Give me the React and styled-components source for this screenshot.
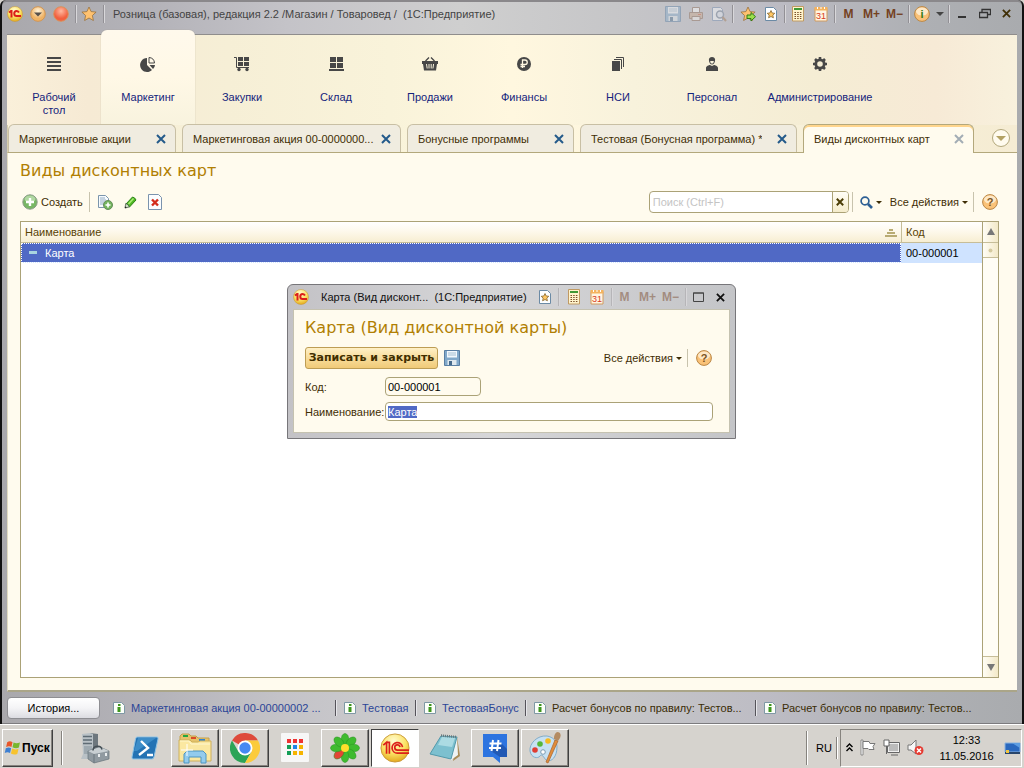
import React from 'react'
import styled, { createGlobalStyle, css } from 'styled-components'

const GlobalStyle = createGlobalStyle`
    * { box-sizing: border-box; }
    html, body, #root { height: 100%; }
    body {
        margin: 0;
        background: #d6d3ce;
        color: #3f2e05;
        font: 11px/14px "Liberation Sans", Arial, sans-serif;
    }
    button, input { font: inherit; color: inherit; }
    button { padding: 0; border: 0; background: none; cursor: pointer; }
    svg { display: block; flex: none; }
    h1, h2 { margin: 0; font-weight: normal; }
`

const Screen = styled.div`
    position: relative;
    display: flex;
    flex-direction: column;
    height: 100vh;
    min-height: 480px;
    overflow: hidden;
`
const Window = styled.div`
    flex: 1;
    min-height: 0;
    display: flex;
    flex-direction: column;
    padding: 0 5px;
    border: 2px solid #111;
    border-width: 0 2px 0 2px;
    border-radius: 6px 6px 0 0;
    background: linear-gradient(90deg, #a9a8ac, #b4b3b9 15%, #c4c3c8 28%, #cfcfcf 45%, #c6c6c8 60%, #bdbcc4 75%, #aeb0b4 90%, #a9abae);
    box-shadow: inset 0 3px 0 -1px #8a888b, inset 0 -1px 0 #7c7b7e;
`
const TitleBar = styled.header`
    display: flex;
    align-items: center;
    height: 35px;
    padding: 0 1px 8px 0;
    flex: none;
`
const AppButtons = styled.div`
    display: flex;
    gap: 7px;
`
const Split = styled.span`
    width: 2px;
    height: ${props => props.h || 18}px;
    margin: ${props => props.m || '0 6px'};
    border-left: 1px solid ${props => props.c || '#929095'};
    border-right: 1px solid ${props => props.light || '#d8d7da'};
    flex: none;
`
const TitleText = styled.span`
    flex: 1;
    padding-left: 2px;
    white-space: pre;
    overflow: hidden;
    color: #444;
`
const TitleTools = styled.div`
    display: flex;
    align-items: center;
`
const IconButton = styled.button`
    display: flex;
    align-items: center;
    justify-content: center;
    width: ${props => props.w || 23}px;
    height: 20px;
    flex: none;
    opacity: ${props => (props.disabled ? 0.45 : 1)};
`
const MemoryButton = styled(IconButton)`
    font-weight: bold;
    font-size: 12px;
    color: #74411f;
`
const Sections = styled.nav`
    display: flex;
    height: 90px;
    flex: none;
    background: linear-gradient(90deg, #faf0da, #f6ead4 8%, #f6efd6 22%, #f9f3da 38%, #fff7df 50%, #f8f2dc 62%, #f5edd4 80%, #f7ead6 92%, #f8f1dd);
    box-shadow: 0 -1px 0 #8f8d8c;
`
const Section = styled.a`
    display: flex;
    flex-direction: column;
    align-items: center;
    width: ${props => props.w || 94}px;
    padding: 21px 8px 0;
    color: #14237c;
    text-align: center;
    text-decoration: none;

    span { max-width: ${props => (props.w ? 'none' : '64px')}; margin-top: 19px; line-height: 13px; }
    ${props => props.$active && css`
        margin-top: -5px;
        padding-top: 26px;
        border-radius: 6px 6px 0 0;
        background: linear-gradient(#fff9ec, #fff8e6 50%, #f8f3de);
        box-shadow: 0 0 1px #a09a86;
    `}
`
const TabStrip = styled.div`
    display: flex;
    align-items: flex-end;
    gap: 6px;
    height: 28px;
    flex: none;
    border-bottom: 1px solid #b3a87c;
    border-left: 1px solid #d6cead;
    background: linear-gradient(90deg, #f8f2dc, #f6efd6 22%, #f9f3da 38%, #fff7df 55%, #f8f2dc 70%, #f5ecd3);
`
const Tab = styled.div`
    display: flex;
    align-items: center;
    justify-content: space-between;
    flex: 0 1 ${props => props.w}px;
    min-width: 0;
    height: 28px;
    padding: 0 7px 0 10px;
    white-space: nowrap;
    border: 1px solid #c8bfa4;
    border-bottom: 0;
    border-radius: 6px 6px 0 0;
    background: #f0ece0;

    ${props => props.$active && css`
        height: 29px;
        margin-bottom: -1px;
        padding-bottom: 1px;
        border-color: #b3a87c;
        background: #fffbee;
        box-shadow: inset 0 2px 0 #ffd58c;
    `}
    button { color: ${props => (props.$active ? '#a3adb5' : '#245a8a')}; }
`
const TabName = styled.span`
    overflow: hidden;
    text-overflow: ellipsis;
`
const TabMenu = styled.button`
    display: flex;
    align-items: center;
    justify-content: center;
    width: 18px;
    height: 18px;
    margin: 0 7px 5px auto;
    border: 1px solid #b3a87c;
    border-radius: 50%;
    background: #fffbee;
`
const Page = styled.main`
    flex: 1;
    min-height: 0;
    display: flex;
    flex-direction: column;
    padding: 7px 18px 12px 12px;
    border-bottom: 2px solid #aaa588;
    border-left: 1px solid #e2dcc2;
    background: #fffbee;
`
const Heading = styled.h1`
    font: 16px/22px "DejaVu Sans", Verdana, sans-serif;
    color: #b17f03;
`
const Toolbar = styled.div`
    display: flex;
    align-items: center;
    height: 22px;
    margin: 9px 0 8px;
    padding-left: 2px;
    flex: none;
`
const TextButton = styled.button`
    display: flex;
    align-items: center;
    gap: 3px;
    height: 20px;
    white-space: nowrap;
`
const ActionsButton = styled(TextButton)`
    margin-left: 8px;
`
const SearchBox = styled.div`
    display: flex;
    width: 200px;
    height: 22px;
    margin-left: auto;
    border: 1px solid #aba277;
    border-radius: 4px;
    background: #fff;
    overflow: hidden;

    input {
        flex: 1;
        min-width: 0;
        padding: 0 3px;
        border: 0;
        outline: 0;
        background: none;
    }
    input::placeholder { color: #c4c4c4; opacity: 1; }
    button {
        display: flex;
        align-items: center;
        justify-content: center;
        width: 16px;
        border-left: 1px solid #aba277;
        background: linear-gradient(#fffdf6, #f5eccb);
        color: #4a3c05;
    }
`
const ListFrame = styled.div`
    flex: 1;
    min-height: 0;
    display: flex;
    border: 1px solid #aba277;
    background: #fff;
`
const ListArea = styled.div`
    flex: 1;
    overflow: hidden;
`
const List = styled.table`
    width: 100%;
    table-layout: fixed;
    border-collapse: separate;
    border-spacing: 0;

    th {
        height: 21px;
        padding: 0 4px;
        text-align: left;
        font-weight: normal;
        color: #594304;
        border-bottom: 1px solid #c6bd98;
        background: linear-gradient(#fff, #fdf8ea 50%, #f7eed2);
    }
    th + th { width: 81px; border-left: 1px solid #c6bd98; }
    th div { display: flex; align-items: center; justify-content: space-between; }
    td { height: 20px; padding: 0 5px; background: #cfe3ff; color: #000; border-bottom: 1px solid #cfe3ff; }
    td:first-child { background: #5069c5; color: #fff; outline: 1px dotted #fff; outline-offset: -1px; }
    td div { display: flex; align-items: center; gap: 8px; padding-left: 3px; }
`
const ScrollBar = styled.div`
    display: flex;
    flex-direction: column;
    width: 16px;
    flex: none;
    border-left: 1px solid #aba277;
    background: #fffdf5;
`
const ScrollButton = styled.button`
    display: flex;
    align-items: center;
    justify-content: center;
    height: ${props => props.h || 21}px;
    border: solid #c6bd98;
    border-width: ${props => (props.$last ? '1px 0 0' : '0 0 1px')};
    margin-top: ${props => (props.$last ? 'auto' : 0)};
    background: linear-gradient(90deg, #fffdf5, #f3e9c8);
`
const HistoryBar = styled.footer`
    display: flex;
    align-items: center;
    height: 32px;
    flex: none;
`
const HistoryButton = styled.button`
    width: 93px;
    height: 22px;
    margin-right: 13px;
    flex: none;
    border: 1px solid #8e8e92;
    border-radius: 4px;
    background: linear-gradient(#fff, #f4f4f6 50%, #dcdce1);
    color: #000;
`
const HistoryItem = styled.a`
    display: flex;
    align-items: center;
    gap: 6px;
    flex: 0 1 ${props => props.w}px;
    min-width: 0;
    color: ${props => (props.$visited ? '#3a2c05' : '#2b4597')};
    text-decoration: none;
    white-space: nowrap;
    overflow: hidden;

    & + & {
        padding-left: 8px;
        border-left: 1px solid #55535a;
        box-shadow: inset 1px 0 0 #e6e6ea;
        height: 16px;
    }
`
const Dialog = styled.section`
    position: absolute;
    left: 287px;
    top: 284px;
    width: 449px;
    padding: 0 5px 5px;
    border: 1px solid #77767a;
    border-radius: 6px 6px 0 0;
    background: linear-gradient(90deg, #c3c2c6, #d6d6d8 45%, #c4c5c8);
`
const DialogBar = styled.div`
    display: flex;
    align-items: center;
    height: 24px;
    color: #111;
    white-space: pre;
`
const DialogCaption = styled.span`
    flex: 1;
    min-width: 0;
    padding-left: 12px;
    overflow: hidden;
`
const DialogBody = styled.form`
    padding: 7px 16px 11px 11px;
    border: 1px solid #c5c2b0;
    background: #fffbee;
`
const DialogTitle = styled.h2`
    font: 16px/22px "DejaVu Sans", Verdana, sans-serif;
    color: #b17f03;
`
const DialogTools = styled.div`
    display: flex;
    align-items: center;
    height: 22px;
    margin: 8px 0;
`
const Spacer = styled.span`
    flex: 1;
`
const SaveButton = styled.button`
    width: 133px;
    height: 22px;
    margin-right: 2px;
    border: 1px solid #bd9d54;
    border-radius: 3px;
    background: linear-gradient(#fff0c6, #f8dd9c 50%, #f0ca78);
    font: bold 11px/14px "DejaVu Sans", Verdana, sans-serif;
    color: #402e00;
    white-space: nowrap;
`
const Field = styled.div`
    display: flex;
    align-items: center;
    height: 19px;

    & + & { margin-top: 6px; }
    label { width: 80px; white-space: nowrap; }
    input {
        flex: 0 1 ${props => props.w}px;
        min-width: 0;
        height: 19px;
        padding: 0 2px;
        border: 1px solid #aba277;
        border-radius: 4px;
        outline: 0;
        color: #000;
        background: ${props => (props.$readOnly ? '#fffbee' : '#fff')};
    }
    input::selection { background: #5069c5; color: #fff; }
`
const TaskBar = styled.footer`
    display: flex;
    align-items: center;
    height: 44px;
    padding: 2px 2px 0 2px;
    flex: none;
    border-top: 1px solid #fff;
    background: #d6d3ce;
    color: #000;
`
const raised = css`
    border: 1px solid;
    border-color: #fff #404040 #404040 #fff;
    box-shadow: inset -1px -1px 0 #86837e;
`
const StartButton = styled.button`
    display: flex;
    align-items: center;
    gap: 1px;
    width: 51px;
    height: 38px;
    padding-left: 1px;
    ${raised}
    font-size: 12px;
    font-weight: bold;
`
const Tasks = styled.div`
    display: flex;
    gap: 2px;
    flex: 1;
    min-width: 0;
`
const Task = styled.button`
    display: flex;
    align-items: center;
    justify-content: center;
    flex: 0 1 48px;
    height: 38px;
    ${props => props.$open && raised}
    ${props => props.$active && css`
        border: 1px solid;
        border-color: #404040 #fff #fff #404040;
        background: #fff;
    `}
`
const Tray = styled.div`
    display: flex;
    align-items: center;
    gap: 6px;
    height: 38px;
    padding-left: 5px;
    border: 1px solid;
    border-color: #86837e #fff #fff #86837e;
`
const TrayIcon = styled.button`
    width: 18px;
    height: 18px;
`
const Clock = styled.time`
    width: 67px;
    padding-left: 4px;
    text-align: center;
    line-height: 16px;
`

const Cross = ({ size = 9, weight = 2 }) => (
    <svg width={size} height={size} viewBox="0 0 10 10" stroke="currentColor" strokeWidth={weight} fill="none">
        <path d="M1 1l8 8M9 1l-8 8" />
    </svg>
)
const Caret = ({ color = '#3f2e05', w = 6 }) => (
    <svg width={w} height={w / 2} viewBox="0 0 6 3"><path d="M0 0h6L3 3z" fill={color} /></svg>
)
const Logo = ({ size = 16 }) => (
    <svg width={size} height={size} viewBox="0 0 32 32">
        <defs>
            <radialGradient id="logo" cx=".45" cy=".25" r=".8">
                <stop offset="0" stopColor="#fffbd0" /><stop offset=".55" stopColor="#fbe264" /><stop offset="1" stopColor="#dfa014" />
            </radialGradient>
        </defs>
        <circle cx="16" cy="16" r="15" fill="url(#logo)" stroke="#c99735" />
        {size > 20 ? (
            <g fill="none" stroke="#dc1f1a" strokeWidth="1.8">
                <path d="M3.500 13l3.500-3v12M7 10h3v12" />
                <path d="M24 15a5.600 5.600 0 1 0-5.500 6.500H31M21.300 15a2.800 2.800 0 1 0-2.800 3.300H31" />
            </g>
        ) : (
            <g fill="none" stroke="#dc1f1a" strokeWidth="4">
                <path d="M4 13l4-3h1v13" />
                <path d="M24 13q-2-3-5-3-4.500 0-4.500 5t4.500 5h9" />
            </g>
        )}
    </svg>
)
const Orb = ({ red }) => (
    <svg width="16" height="16" viewBox="0 0 16 16">
        <defs>
            <radialGradient id={red ? 'orbRed' : 'orbSand'} cx=".5" cy=".3">
                <stop offset="0" stopColor={red ? '#ffb9a0' : '#fff4dc'} /><stop offset="1" stopColor={red ? '#f2603f' : '#efb365'} />
            </radialGradient>
        </defs>
        <circle cx="8" cy="8" r="7.300" fill={red ? 'url(#orbRed)' : 'url(#orbSand)'} stroke={red ? '#d9925c' : '#d29552'} />
        {!red && <path d="M4 6.500h8L8 10.500z" fill="#57504b" />}
    </svg>
)
const star = 'M8 1l2.100 4.600 5 .5-3.700 3.400 1 5L8 12l-4.400 2.500 1-5L.9 6.100l5-.5z'
const Star = ({ arrow }) => (
    <svg width="16" height="16" viewBox="0 0 16 16">
        <path d={star} fill="#ffc270" stroke="#98713c" strokeWidth=".8" />
        {arrow && <path d="M7 9h4V6.500l4.500 4.200L11 15v-2.500H7z" fill="#9ce04c" stroke="#317b14" />}
    </svg>
)
const StarPage = () => (
    <svg width="14" height="16" viewBox="0 0 14 16">
        <path d="M1.500 1.500h8l3 3v10h-11z" fill="#fdfeff" stroke="#6b8aa5" />
        <path d="M7 4.500l1.200 2.500 2.600.3-2 1.800.6 2.700L7 10.500l-2.400 1.300.6-2.700-2-1.800 2.600-.3z" fill="#ffc763" stroke="#87662f" strokeWidth=".8" />
    </svg>
)
const Floppy = () => (
    <svg width="16" height="16" viewBox="0 0 16 16">
        <path d="M.5.500h15v15H.5z" fill="#82a9ca" stroke="#5a7fa3" />
        <path d="M3 1h10v6.500H3z" fill="#f3f8fc" /><path d="M4 3h8M4 5h8" stroke="#a5bfd2" />
        <path d="M3.500 10h9v5h-9z" fill="#dfe8ee" /><path d="M5 11h3v4H5z" fill="#466a8b" />
    </svg>
)
const Printer = () => (
    <svg width="16" height="16" viewBox="0 0 16 16" stroke="#8d6c56">
        <path d="M4.500 7V1.500h7V7" fill="#fff" /><path d="M1.500 6.500h13v6h-13z" fill="#cba98d" /><path d="M4 10.500h8v4H4z" fill="#f6f3ef" /><path d="M10 8.500h3" stroke="#d45a3a" />
    </svg>
)
const Preview = () => (
    <svg width="16" height="16" viewBox="0 0 16 16" fill="none">
        <path d="M1.500 1.500h8l2 2v11h-10z" fill="#fbfdff" stroke="#748eb0" /><circle cx="9" cy="8.500" r="3.500" fill="#e6edf5" stroke="#728295" strokeWidth="1.500" /><path d="M11.500 11l3.500 4" stroke="#a27c56" strokeWidth="2" />
    </svg>
)
const Calculator = () => (
    <svg width="12" height="16" viewBox="0 0 12 16">
        <path d="M.5.500h11v14.500H.5z" fill="#fff4cd" stroke="#c09a62" /><path d="M2 2h8v2H2z" fill="#3f9935" />
        <path d="M2.500 6.500h7M2.500 8.500h7M2.500 10.500h7M2.500 12.500h7" stroke="#7a4f2a" strokeDasharray="1.500 1.200" />
    </svg>
)
const Calendar = () => (
    <svg width="14" height="16" viewBox="0 0 14 16">
        <path d="M1 2.500h12V15H1z" fill="#fff5e2" stroke="#d09a5e" /><path d="M.5 1h13v3.500H.5z" fill="#f4b35f" />
        <path d="M3.500 1v2M7 1v2M10.500 1v2" stroke="#fff" />
        <text x="7" y="13" textAnchor="middle" fontFamily="Liberation Sans" fontSize="9" fill="#d83b21">31</text>
    </svg>
)
const Badge = ({ children, color = '#7a541f' }) => (
    <svg width="16" height="16" viewBox="0 0 16 16">
        <circle cx="8" cy="8" r="7.400" fill="#fac278" stroke="#b98645" /><ellipse cx="8" cy="5.500" rx="6" ry="4" fill="#fff4e0" opacity=".75" />
        <text x="8" y="12" textAnchor="middle" fontFamily="Liberation Sans" fontSize="11" fontWeight="bold" fill={color}>{children}</text>
    </svg>
)
const InfoPage = () => (
    <svg width="12" height="14" viewBox="0 0 12 14">
        <path d="M.5 1.500h8l3 3v8H.5z" fill="#fbfff9" stroke="#7f98a5" /><path d="M5 3h2.500v2H5zM4.500 6h3v5h-3z" fill="#3e961c" />
    </svg>
)
const Plus = () => (
    <svg width="16" height="16" viewBox="0 0 16 16">
        <circle cx="8" cy="8" r="7.200" fill="#78b765" stroke="#8b9a88" /><ellipse cx="8" cy="5" rx="5.500" ry="3.500" fill="#c8e4ba" opacity=".7" />
        <path d="M8 4v8M4 8h8" stroke="#fff" strokeWidth="2.400" />
    </svg>
)
const CopyAdd = () => (
    <svg width="16" height="16" viewBox="0 0 16 16">
        <path d="M1.500 1.500h7l3 3v9h-10z" fill="#f6fafd" stroke="#7b95ac" /><path d="M3 4h5M3 6h6M3 8h6M3 10h4" stroke="#93acc4" />
        <circle cx="11" cy="11" r="4.500" fill="#73b45c" stroke="#648c5a" /><path d="M11 8.500v5M8.500 11h5" stroke="#fff" strokeWidth="1.600" />
    </svg>
)
const Pencil = () => (
    <svg width="13" height="13" viewBox="0 0 13 13">
        <path d="M2 8l6.500-7q2.500.5 3.500 3l-6.500 7z" fill="#4fb822" stroke="#2a8217" /><path d="M4.500 8l5-5.500" stroke="#a9ec76" strokeWidth="1.500" /><path d="M1 12l.7-4.500Q4.500 8 5.300 11z" fill="#cfe0c4" stroke="#3c4c3c" strokeWidth=".7" /><path d="M.8 12.300l.4-2 1.600 1.500z" fill="#222" />
    </svg>
)
const DeletePage = () => (
    <svg width="14" height="16" viewBox="0 0 14 16">
        <path d="M.5.500h10l3 3v12H.5z" fill="#fbfdff" stroke="#7b93ad" /><path d="M4 5.500l6 6M10 5.500l-6 6" stroke="#d32c1c" strokeWidth="2.400" />
    </svg>
)
const Magnifier = () => (
    <svg width="13" height="13" viewBox="0 0 13 13" fill="none" stroke="#2d5f94"><circle cx="5" cy="5" r="3.900" strokeWidth="1.700" /><path d="M8 8l4 4" strokeWidth="2.600" /></svg>
)

const sectionIcons = {
    desk: <path d="M1 2h14M1 6h14M1 10h14M1 14h14" stroke="#474747" strokeWidth="2" />,
    pie: <><path d="M7 2v7l5 5A7 7 0 1 1 7 2z" /><path d="M9 1.500A6 6 0 0 1 14.500 7H9z" fill="none" stroke="#474747" /><path d="M9.500 9H15a6 6 0 0 1-2 4z" /></>,
    cart: <><path d="M4 1h5v4H4zM10 1h5v4h-5zM4 6h5v4H4zM10 6h5v4h-5z" /><path d="M0 1.500h2.500v10H15" fill="none" stroke="#474747" /><circle cx="5" cy="13.500" r="1.700" /><circle cx="13" cy="13.500" r="1.700" /></>,
    store: <path d="M2 1h6v5H2zM9 1h6v5H9zM2 7h6v5H2zM9 7h6v5H9zM1 13h15v2H1z" />,
    basket: <><path d="M0 5h16v3H15l-1 6.500H2L1 8H0z" /><path d="M3.500 5L7 1.500M12.500 5L9 1.500" stroke="#474747" strokeWidth="1.300" /><path d="M4.500 8l.7 4.500M7 8v4.500M9.200 8v4.500M11.600 8l-.7 4.500" stroke="#f7f1da" /></>,
    rouble: <><circle cx="8" cy="8" r="7" /><path d="M6.500 12V4H9a2 2 0 0 1 0 4.500H4.500M4.500 10.500H9" stroke="#fff7e2" strokeWidth="1.300" fill="none" /></>,
    books: <><path d="M2 5h8v10H2z" /><path d="M4 3.500h7.500V13M6 1.500h7.500V11" fill="none" stroke="#474747" /></>,
    person: <><path d="M8 1c4 0 3.500 4 2 6.500-.8 1.300-3.200 1.300-4 0C4.500 5 4 1 8 1z" /><path d="M6.200 5h3.600c0 1.600-.8 2.600-1.800 2.600S6.200 6.600 6.200 5z" fill="#f7f1da" /><path d="M2 15v-3c0-2 3-3 4-3l2 1 2-1c1 0 4 1 4 3v3z" /></>,
    gear: <><circle cx="8" cy="8" r="4.200" fill="none" stroke="#474747" strokeWidth="2.800" /><path d="M8 1v3M8 12v3M1 8h3M12 8h3M3 3l2 2M11 11l2 2M13 3l-2 2M5 11l-2 2" stroke="#474747" strokeWidth="2.600" /></>,
}

const sections = [
    { name: 'Рабочий стол', icon: 'desk' },
    { name: 'Маркетинг', icon: 'pie', active: true },
    { name: 'Закупки', icon: 'cart' },
    { name: 'Склад', icon: 'store' },
    { name: 'Продажи', icon: 'basket' },
    { name: 'Финансы', icon: 'rouble' },
    { name: 'НСИ', icon: 'books' },
    { name: 'Персонал', icon: 'person' },
    { name: 'Администрирование', icon: 'gear', w: 122 },
]
const tabs = [
    { name: 'Маркетинговые акции', w: 168 },
    { name: 'Маркетинговая акция 00-0000000...', w: 219 },
    { name: 'Бонусные программы', w: 167 },
    { name: 'Тестовая (Бонусная программа) *', w: 217 },
    { name: 'Виды дисконтных карт', w: 171, active: true },
]
const history = [
    { name: 'Маркетинговая акция 00-00000002 ...', w: 222 },
    { name: 'Тестовая', w: 80 },
    { name: 'ТестоваяБонус', w: 110 },
    { name: 'Расчет бонусов по правилу: Тестов...', w: 230, visited: true },
    { name: 'Расчет бонусов по правилу: Тестов...', w: 230, visited: true },
]

const Windows = () => (
    <svg width="17" height="17" viewBox="0 0 16 16">
        <path d="M3 3c2-1.500 3.500-1 5 0L7 7.500C5.500 6.500 4 6.500 2 7.500z" fill="#e8562a" /><path d="M9 3.200c2 1 3.500 1 6 0L14 8c-2 1-4 .8-6-.3z" fill="#78b72e" />
        <path d="M1.700 8.700c2-1 3.500-1 5 0l-1 4.500c-1.500-1-3.500-1-5 0z" fill="#3d7fd2" /><path d="M7.700 9c2 1 4 1 6 .2L12.500 14c-2 .8-4 .8-6-.4z" fill="#f7c32e" />
    </svg>
)
const ServerIcon = () => (
    <svg width="30" height="32" viewBox="0 0 30 32">
        <path d="M10 1l8 1v20l-6 3z" fill="#6d777e" /><path d="M2 2l8-1 3 1v22l-4 3H1l2-5z" fill="#b9c1c6" />
        <path d="M3 4.500h9M3 8h9M3 11.500h9" stroke="#5f6c75" strokeWidth="1.600" /><path d="M4 14h8v8H4z" fill="#9ea9b0" />
        <path d="M8 19l12-4 9 4v8l-15 4-6-4z" fill="#909aa1" stroke="#66727a" strokeWidth=".7" /><path d="M8 19l6 3 15-3-9-4z" fill="#c8cfd3" /><path d="M14 22v9" stroke="#6b767e" />
        <path d="M13 18.500c0-5 8-6 9-1" stroke="#454f56" strokeWidth="1.500" fill="none" /><path d="M18 22h2v3h-2zM25 21h2v3h-2z" fill="#e9edef" />
    </svg>
)
const ShellIcon = () => (
    <svg width="28" height="24" viewBox="0 0 28 24">
        <path d="M6 1h20q1.500 0 1 2l-4 18q-.5 2-2 2H2q-1.500 0-1-2L4.500 3Q5 1 6 1z" fill="#2473b4" stroke="#8fc4e6" /><path d="M7 2h18L6 15l-3 0z" fill="#4f9fd6" opacity=".6" />
        <path d="M10 5l7 7-9 7M16 19h6" stroke="#fff" strokeWidth="2.400" fill="none" />
    </svg>
)
const FoldersIcon = () => (
    <svg width="34" height="32" viewBox="0 0 34 32">
        <path d="M2 4l2-2h7l2 2h5l2 2h11v14H2z" fill="#e6c36b" stroke="#c2a04c" /><path d="M5 3h5v2H5z" fill="#23a840" /><path d="M13 5h5v2h-5z" fill="#d94b2a" /><path d="M21 7h6v2h-6z" fill="#3084d0" />
        <path d="M1 8h11l2 2h6l2-1h11v20H1z" fill="#fbe8a1" stroke="#ceb05b" /><path d="M2 9h9l2 3h19" fill="none" stroke="#fff7cf" />
        <path d="M6 31V22l3-3h16l3 3v9h-5v-6H11v6z" fill="#93cbed" stroke="#4d95c2" /><path d="M9 12v12M3 18h12" stroke="#fff" />
    </svg>
)
const ChromeIcon = () => (
    <svg width="30" height="30" viewBox="0 0 30 30">
        <path d="M15 15L2 7.500A15 15 0 0 1 28 7.500H15z" fill="#de4a3b" /><path d="M15 15L8.500 18.700 2 7.500A15 15 0 0 0 15 30l6.500-11.300z" fill="#2ca457" /><path d="M15 7.500h13A15 15 0 0 1 15 30l6.500-11.300z" fill="#fbcb3c" /><circle cx="15" cy="15" r="7.500" fill="#fff" /><circle cx="15" cy="15" r="5.700" fill="#4689f2" />
    </svg>
)
const AppsIcon = () => (
    <svg width="28" height="30" viewBox="0 0 28 30">
        <rect width="28" height="29" rx="1" fill="#f7f7f7" />
        {['#e33', '#e33', '#e33', '#139e57', '#1d86e8', '#f5b400', '#139e57', '#f5b400', '#f5b400'].map((c, i) => (
            <rect key={i} x={6 + (i % 3) * 6} y={6 + Math.floor(i / 3) * 6} width="4" height="4" fill={c} />
        ))}
    </svg>
)
const FlowerIcon = () => (
    <svg width="30" height="30" viewBox="0 0 30 30">
        {[0, 45, 90, 135, 180, 225, 270, 315].map(a => (
            <ellipse key={a} cx="15" cy="6.500" rx="3.800" ry="6" fill={a === 225 ? '#e34635' : '#3fbb2f'} stroke="#299220" strokeWidth=".5" transform={`rotate(${a} 15 15)`} />
        ))}
        <circle cx="15" cy="15" r="4" fill="#ffdf2b" />
    </svg>
)
const NotepadIcon = () => (
    <svg width="32" height="30" viewBox="0 0 32 30">
        <path d="M28 4l3 19-7 5z" fill="#a98c58" /><path d="M28 4l1 18-7 5-2-2z" fill="#eef3f4" />
        <path d="M12 3l16 1-6 22L1 21z" fill="#7dc0cf" stroke="#5299ab" /><path d="M13 4l13 1-3 9-14-2z" fill="#b8e1e7" opacity=".8" /><path d="M12 2.500l16 1.500" stroke="#68777b" strokeWidth="2.500" strokeDasharray="1 1" />
    </svg>
)
const HashIcon = () => (
    <svg width="24" height="30" viewBox="0 0 24 30"><path d="M0 1h24v23h-7v6l-7-6H0z" fill="#2d74e0" /><path d="M17 9l7 7v8h-7l-9-6z" fill="#2259b4" /><path d="M10 7L8.500 18M15.500 7L14 18M6.500 10.500h12M6 15h12" stroke="#fff" strokeWidth="2" /></svg>
)
const PaletteIcon = () => (
    <svg width="32" height="32" viewBox="0 0 32 32">
        <path d="M18 4C8 3 0 12 1 19s8 8 10 5 4 2 6 4c6 3 11-4 11-13 0-6-4-10-10-11z" fill="#c7e1f2" stroke="#82adca" /><circle cx="6" cy="18" r="2.800" fill="#df3d32" /><circle cx="11" cy="12" r="2.800" fill="#55b73a" /><circle cx="19" cy="9" r="2.800" fill="#f6ba20" /><circle cx="14" cy="20" r="2.300" fill="#fff" stroke="#7c9cb2" />
        <path d="M26 8l3 1-10 22-2-1z" fill="#e08d3c" stroke="#a9622a" strokeWidth=".7" /><path d="M25 5q1-5 4-5 4 1 2 6l-2 3-4-2z" fill="#b48b62" />
    </svg>
)

const tasks = [
    { name: 'Диспетчер сервера', Icon: ServerIcon },
    { name: 'PowerShell', Icon: ShellIcon },
    { name: 'Проводник', Icon: FoldersIcon, open: true },
    { name: 'Chrome', Icon: ChromeIcon, open: true },
    { name: 'Приложения', Icon: AppsIcon },
    { name: 'ICQ', Icon: FlowerIcon, open: true },
    { name: '1С', Icon: () => <Logo size={30} />, active: true },
    { name: 'Блокнот', Icon: NotepadIcon },
    { name: 'Чат', Icon: HashIcon, open: true },
    { name: 'Paint', Icon: PaletteIcon, open: true },
]

const CardDialog = () => (
    <Dialog role="dialog" aria-labelledby="card-title">
        <DialogBar>
            <IconButton w={16} aria-label="Меню"><Logo /></IconButton>
            <DialogCaption>Карта (Вид дисконт...  (1С:Предприятие)</DialogCaption>
            <IconButton aria-label="В избранное"><StarPage /></IconButton>
            <Split m="0 2px 0 2px" c="#b6b5b8" />
            <IconButton aria-label="Калькулятор"><Calculator /></IconButton>
            <IconButton aria-label="Календарь"><Calendar /></IconButton>
            <Split m="0 0 0 3px" c="#b6b5b8" />
            <MemoryButton disabled>M</MemoryButton>
            <MemoryButton disabled>M+</MemoryButton>
            <MemoryButton disabled>M−</MemoryButton>
            <Split m="0 0 0 3px" c="#b6b5b8" />
            <IconButton aria-label="Развернуть">
                <svg width="11" height="10" viewBox="0 0 11 10"><path d="M.5 1h10v8.500H.5zM0 1h11" fill="none" stroke="#444" /></svg>
            </IconButton>
            <IconButton w={20} aria-label="Закрыть"><Cross /></IconButton>
        </DialogBar>
        <DialogBody onSubmit={e => e.preventDefault()}>
            <DialogTitle id="card-title">Карта (Вид дисконтной карты)</DialogTitle>
            <DialogTools>
                <SaveButton type="submit">Записать и закрыть</SaveButton>
                <IconButton type="button" aria-label="Записать"><Floppy /></IconButton>
                <Spacer />
                <TextButton type="button">Все действия <Caret /></TextButton>
                <Split m="0 5px" c="#c8c3ad" light="#fffbee" />
                <IconButton type="button" w={19} aria-label="Справка"><Badge>?</Badge></IconButton>
            </DialogTools>
            <Field w={96} $readOnly>
                <label htmlFor="code">Код:</label>
                <input id="code" defaultValue="00-000001" readOnly />
            </Field>
            <Field w={328}>
                <label htmlFor="name">Наименование:</label>
                <input id="name" defaultValue="Карта" autoFocus onFocus={e => e.target.select()} />
            </Field>
        </DialogBody>
    </Dialog>
)

const App = () => (
    <Screen>
        <GlobalStyle />
        <Window>
            <TitleBar>
                <AppButtons>
                    <IconButton w={16} aria-label="Меню"><Logo /></IconButton>
                    <IconButton w={16} aria-label="Функции"><Orb /></IconButton>
                    <IconButton w={16} aria-label="Стоп"><Orb red /></IconButton>
                </AppButtons>
                <Split m="0 4px 0 6px" />
                <IconButton w={16} aria-label="Избранное"><Star /></IconButton>
                <Split />
                <TitleText>Розница (базовая), редакция 2.2 /Магазин / Товаровед /  (1С:Предприятие)</TitleText>
                <TitleTools>
                    <IconButton disabled aria-label="Сохранить"><Floppy /></IconButton>
                    <IconButton disabled aria-label="Печать"><Printer /></IconButton>
                    <IconButton disabled aria-label="Просмотр"><Preview /></IconButton>
                    <Split m="0 2px 0 2px" />
                    <IconButton aria-label="Добавить в избранное"><Star arrow /></IconButton>
                    <IconButton aria-label="Ссылка"><StarPage /></IconButton>
                    <Split m="0 0 0 2px" />
                    <IconButton aria-label="Калькулятор"><Calculator /></IconButton>
                    <IconButton aria-label="Календарь"><Calendar /></IconButton>
                    <Split m="0 1px 0 2px" />
                    <MemoryButton>M</MemoryButton>
                    <MemoryButton>M+</MemoryButton>
                    <MemoryButton>M−</MemoryButton>
                    <Split m="0 0 0 2px" />
                    <IconButton aria-label="О программе"><Badge color="#2f7a16">i</Badge></IconButton>
                    <IconButton w={13} aria-label="Ещё"><Caret w={8} color="#444" /></IconButton>
                    <Split m="0 0 0 2px" />
                    <IconButton aria-label="Свернуть"><svg width="8" height="10"><path d="M0 8h8" stroke="#333" strokeWidth="2" /></svg></IconButton>
                    <IconButton aria-label="Восстановить">
                        <svg width="12" height="11" viewBox="0 0 12 11"><path d="M3 4V1.500h8.500v5H9M.5 4.500h8v5h-8z" fill="none" stroke="#333" strokeWidth="1.300" /></svg>
                    </IconButton>
                    <IconButton w={20} aria-label="Закрыть"><Cross /></IconButton>
                </TitleTools>
            </TitleBar>
            <Sections>
                {sections.map(s => (
                    <Section key={s.name} href="#" w={s.w} $active={s.active}>
                        <svg width="16" height="16" viewBox="0 0 16 16" fill="#474747">{sectionIcons[s.icon]}</svg>
                        <span>{s.name}</span>
                    </Section>
                ))}
            </Sections>
            <TabStrip>
                {tabs.map(t => (
                    <Tab key={t.name} w={t.w} $active={t.active}>
                        <TabName>{t.name}</TabName>
                        <IconButton w={14} aria-label="Закрыть вкладку"><Cross size={10} /></IconButton>
                    </Tab>
                ))}
                <TabMenu aria-label="Список вкладок"><Caret w={10} color="#b3a264" /></TabMenu>
            </TabStrip>
            <Page>
                <Heading>Виды дисконтных карт</Heading>
                <Toolbar>
                    <TextButton><Plus />Создать</TextButton>
                    <Split h={20} m="0 2px 0 6px" c="#c8c3ad" light="#fffbee" />
                    <IconButton w={25} aria-label="Скопировать"><CopyAdd /></IconButton>
                    <IconButton w={25} aria-label="Изменить"><Pencil /></IconButton>
                    <IconButton w={25} aria-label="Пометить на удаление"><DeletePage /></IconButton>
                    <SearchBox>
                        <input aria-label="Поиск" placeholder="Поиск (Ctrl+F)" />
                        <button aria-label="Очистить"><Cross size={8} weight={2.4} /></button>
                    </SearchBox>
                    <Split h={20} m="0 6px 0 3px" c="#c8c3ad" light="#fffbee" />
                    <TextButton aria-label="Найти"><Magnifier /><Caret /></TextButton>
                    <ActionsButton>Все действия <Caret /></ActionsButton>
                    <Split h={20} m="0 5px" c="#c8c3ad" light="#fffbee" />
                    <IconButton w={19} aria-label="Справка"><Badge>?</Badge></IconButton>
                </Toolbar>
                <ListFrame>
                    <ListArea>
                        <List>
                            <thead>
                                <tr>
                                    <th><div>Наименование <svg width="12" height="9"><path d="M4 1h4v2H4zM2 4h8v2H2zM0 7h12v2H0z" fill="#b8ab73" /></svg></div></th>
                                    <th>Код</th>
                                </tr>
                            </thead>
                            <tbody>
                                <tr>
                                    <td><div><svg width="8" height="3"><path d="M0 0h8v3H0z" fill="#a9d4df" /></svg>Карта</div></td>
                                    <td>00-000001</td>
                                </tr>
                            </tbody>
                        </List>
                    </ListArea>
                    <ScrollBar>
                        <ScrollButton aria-label="Вверх"><svg width="8" height="8"><path d="M0 7h8L4 0z" fill="#777" /></svg></ScrollButton>
                        <ScrollButton h={15} aria-label="Ползунок"><svg width="5" height="5"><circle cx="2.500" cy="2.500" r="2" fill="#d5caa0" /></svg></ScrollButton>
                        <ScrollButton $last aria-label="Вниз"><svg width="8" height="8"><path d="M0 1h8L4 8z" fill="#777" /></svg></ScrollButton>
                    </ScrollBar>
                </ListFrame>
            </Page>
            <HistoryBar>
                <HistoryButton>История...</HistoryButton>
                {history.map((h, i) => (
                    <HistoryItem key={i} href="#" w={h.w} $visited={h.visited}><InfoPage />{h.name}</HistoryItem>
                ))}
            </HistoryBar>
        </Window>
        <TaskBar>
            <StartButton><Windows />Пуск</StartButton>
            <Split h={34} m="0 8px" c="#86837e" light="#fff" />
            <Tasks>
                {tasks.map(({ name, Icon, open, active }) => (
                    <Task key={name} aria-label={name} $open={open} $active={active}><Icon /></Task>
                ))}
            </Tasks>
            <Split h={34} m="0 8px" c="#86837e" light="#fff" />
            <span>RU</span>
            <Split h={22} m="0 2px 0 4px" c="#86837e" light="#fff" />
            <Tray>
                <svg width="7" height="9" viewBox="0 0 7 9" fill="none" stroke="#000" strokeWidth="1.400"><path d="M.5 4l3-3 3 3M.5 8l3-3 3 3" /></svg>
                <TrayIcon aria-label="Центр поддержки"><svg width="17" height="17" viewBox="0 0 17 17"><path d="M2 1h2v15H2z" fill="#fff" stroke="#777" strokeWidth=".8" /><path d="M4 2.500h6l1 2h5l-2 3 1 3h-5l-1-1H4z" fill="#fff" stroke="#777" /></svg></TrayIcon>
                <TrayIcon aria-label="Сеть"><svg width="17" height="17" viewBox="0 0 17 17"><path d="M5 4h11v9H5z" fill="#bbb" stroke="#fff" strokeWidth="1.500" /><path d="M4.500 3.500h12v10h-12zM8 16h7" fill="none" stroke="#666" /><path d="M1 1h5v6H1zM3.500 7v8" fill="#fff" stroke="#666" /></svg></TrayIcon>
                <TrayIcon aria-label="Звук"><svg width="17" height="17" viewBox="0 0 17 17"><path d="M1 6h3l5-5v14l-5-4H1z" fill="#f7f7f7" stroke="#777" /><circle cx="12" cy="11.500" r="4.500" fill="#e53b32" /><path d="M10 9.500l4 4M14 9.500l-4 4" stroke="#fff" strokeWidth="1.500" /></svg></TrayIcon>
                <Clock>12:33<br />11.05.2016</Clock>
                <svg width="17" height="14" viewBox="0 0 17 14"><path d="M1 2h15v9H1z" fill="#2a68be" stroke="#8ab2df" /><path d="M8 2h8v5z" fill="#5d9de2" /><path d="M1 11h15v2H1z" fill="#28456b" /><path d="M2 9h3v3H2z" fill="#f2c53d" /></svg>
            </Tray>
        </TaskBar>
        <CardDialog />
    </Screen>
)

export default App
